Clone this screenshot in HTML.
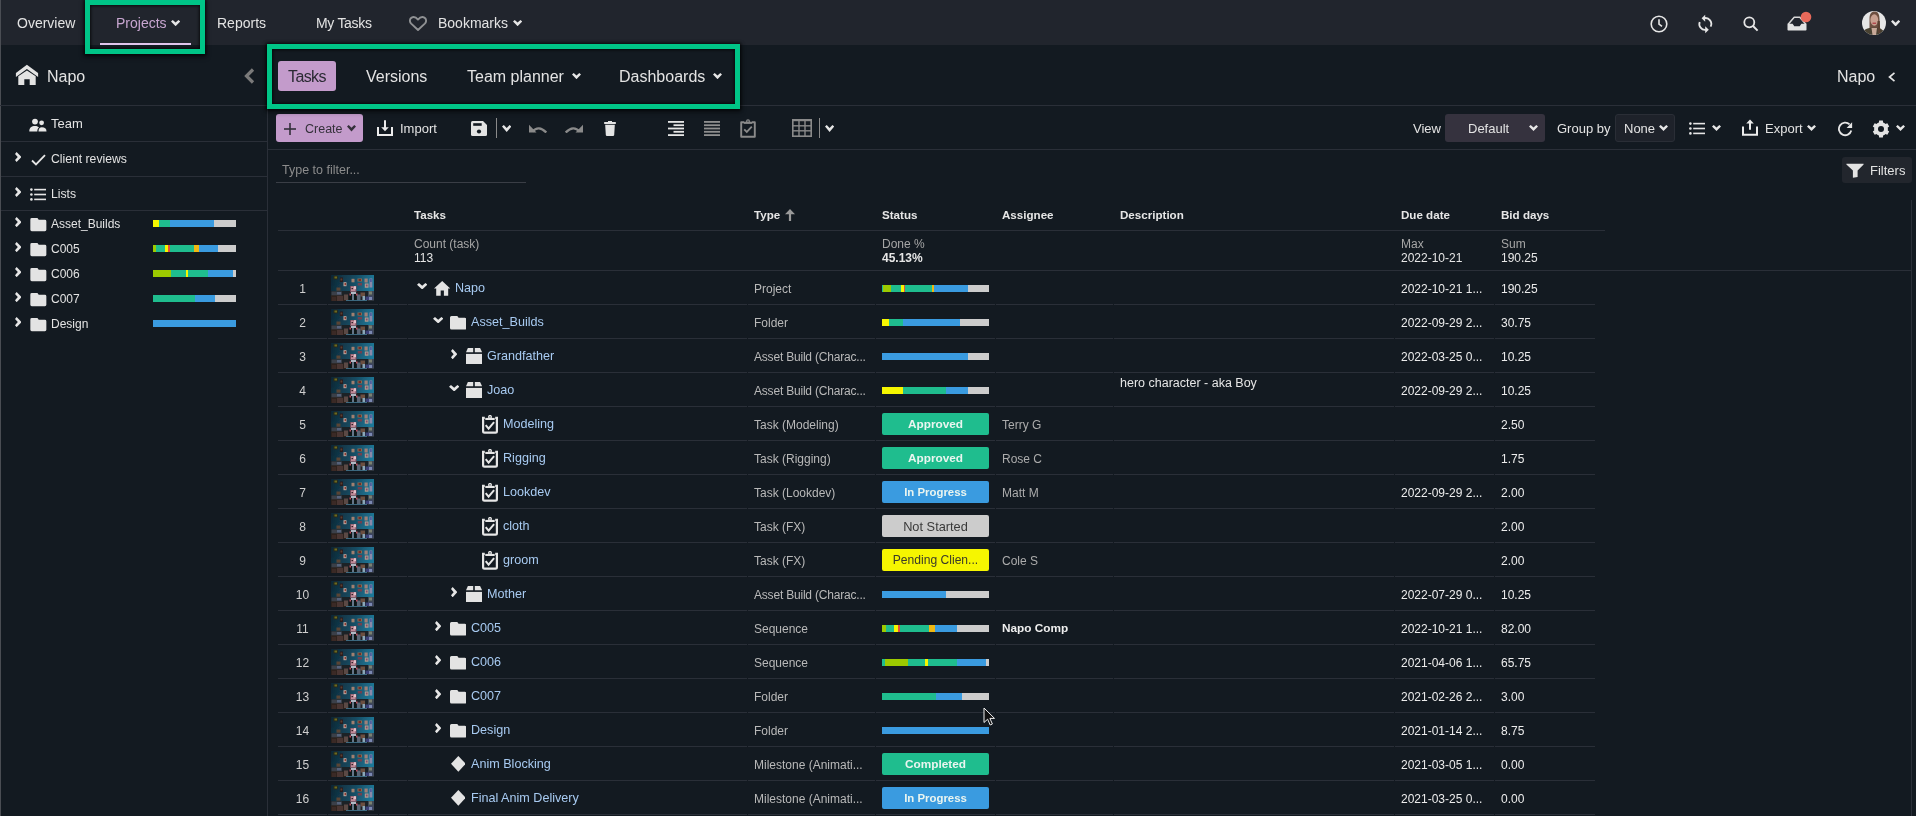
<!DOCTYPE html><html><head><meta charset="utf-8"><style>
html,body{margin:0;padding:0;-webkit-font-smoothing:antialiased;width:1916px;height:816px;overflow:hidden;background:#131a21;font-family:"Liberation Sans", sans-serif;}
.t{position:absolute;white-space:nowrap;line-height:1;}
.r{position:absolute;display:block;}
#root{position:absolute;left:0;top:0;width:1916px;height:816px;overflow:hidden;will-change:transform;background:#131a21;}
</style></head><body><div id="root">
<div class="r" style="left:0px;top:0px;width:1916px;height:45px;background:#21252d;"></div>
<div class="r" style="left:0px;top:0px;width:1px;height:816px;background:#4a4d53;"></div>
<div class="t" style="left:17px;top:16.10px;font-size:14px;color:#e3e3e3;font-weight:400;">Overview</div>
<div class="t" style="left:116px;top:16.10px;font-size:14px;color:#c8a6d0;font-weight:400;">Projects</div>
<svg class="r" style="left:171px;top:20px;" width="9.2" height="6.2" viewBox="0 0 9.2 6.2"><polygon points="0,1.49 1.75,0 4.60,2.60 7.45,0 9.2,1.49 4.60,6.2" fill="#e6e6e6"/></svg>
<div class="r" style="left:100px;top:43px;width:91px;height:2px;background:#e0c4ec;"></div>
<div class="t" style="left:217px;top:16.10px;font-size:14px;color:#e3e3e3;font-weight:400;">Reports</div>
<div class="t" style="left:316px;top:16.10px;font-size:14px;color:#e3e3e3;font-weight:400;letter-spacing:-0.3px">My Tasks</div>
<svg class="r" style="left:409px;top:16px;" width="18" height="15" viewBox="0 0 18 15"><path d="M9 14 L2.2 7.6 C0.3 5.7 0.6 2.7 2.6 1.6 C4.6 0.5 7 1.2 9 3.6 C11 1.2 13.4 0.5 15.4 1.6 C17.4 2.7 17.7 5.7 15.8 7.6 Z" fill="none" stroke="#909294" stroke-width="1.9" stroke-linejoin="round"/></svg>
<div class="t" style="left:438px;top:16.10px;font-size:14px;color:#e3e3e3;font-weight:400;">Bookmarks</div>
<svg class="r" style="left:513px;top:20px;" width="9.2" height="6.2" viewBox="0 0 9.2 6.2"><polygon points="0,1.49 1.75,0 4.60,2.60 7.45,0 9.2,1.49 4.60,6.2" fill="#e6e6e6"/></svg>
<svg class="r" style="left:1650px;top:15px;" width="18" height="18" viewBox="0 0 18 18"><circle cx="9" cy="9" r="7.8" fill="none" stroke="#e6e6e6" stroke-width="1.6"/><polyline points="9,4.2 9,9.2 12,11.4" fill="none" stroke="#e6e6e6" stroke-width="1.6"/></svg>
<svg class="r" style="left:1697px;top:14px;" width="16" height="20" viewBox="0 0 16 20"><path d="M7.2 4.2 A5.8 5.8 0 0 1 13.6 12.6" fill="none" stroke="#e6e6e6" stroke-width="1.8"/><polygon points="4.6,4.2 8.2,0.7 8.2,7.7" fill="#e6e6e6"/><path d="M2.7 8 A5.8 5.8 0 0 0 8.9 15.8" fill="none" stroke="#e6e6e6" stroke-width="1.8"/><polygon points="11.8,15.8 8.2,12.3 8.2,19.3" fill="#e6e6e6"/></svg>
<svg class="r" style="left:1743px;top:16px;" width="16" height="16" viewBox="0 0 16 16"><circle cx="6.3" cy="6.3" r="5" fill="none" stroke="#e6e6e6" stroke-width="1.8"/><line x1="10" y1="10" x2="14.6" y2="14.6" stroke="#e6e6e6" stroke-width="2"/></svg>
<svg class="r" style="left:1787px;top:16px;" width="20" height="15" viewBox="0 0 20 15"><path d="M1.2 8.2 L7.2 1.2 L12.8 1.2 L18.8 8.2" fill="none" stroke="#d8d8d8" stroke-width="1.5" stroke-linejoin="round"/><path d="M0.5 7.8 L5.6 7.8 L7.3 10.3 L12.7 10.3 L14.4 7.8 L19.5 7.8 L19.5 13.7 Q19.5 14.5 18.7 14.5 L1.3 14.5 Q0.5 14.5 0.5 13.7 Z" fill="#e3e3e3"/></svg>
<svg class="r" style="left:1800px;top:11px;" width="12" height="12" viewBox="0 0 12 12"><circle cx="6" cy="6" r="5.3" fill="#e8695a"/></svg>
<svg class="r" style="left:1862px;top:11px" width="24" height="24" viewBox="0 0 24 24"><defs><clipPath id="av"><circle cx="12" cy="12" r="12"/></clipPath><filter id="avb"><feGaussianBlur stdDeviation="0.4"/></filter></defs><g clip-path="url(#av)"><rect width="24" height="24" fill="#e6e6e6"/><g filter="url(#avb)"><path d="M7.5 24 L7.5 8 C7.5 2.5 9.5 0.5 12.5 0.5 C16 0.5 17.5 3 17.5 8 L18 22 L16 24 Z" fill="#6e5040"/><ellipse cx="12.3" cy="9" rx="3.9" ry="5.8" fill="#c9a090"/><rect x="10.5" y="11.6" width="3.6" height="1.3" fill="#b04048"/><path d="M0 24 L2 19.5 C4 17.5 7 17 9 16.8 L15.5 16.8 C17.5 17 19.5 18 21 19.5 L24 24 Z" fill="#4a4232"/><path d="M9.5 17 L15 17 L14 24 L10.5 24 Z" fill="#c8a898"/><path d="M15.5 10 L17.8 10 L18.2 22 L15.8 22 Z" fill="#5a4030"/></g></g></svg>
<svg class="r" style="left:1891px;top:19.5px;" width="9.2" height="6.5" viewBox="0 0 9.2 6.5"><polygon points="0,1.49 1.75,0 4.60,2.73 7.45,0 9.2,1.49 4.60,6.5" fill="#e6e6e6"/></svg>
<div class="r" style="left:267px;top:45px;width:1px;height:771px;background:#2a2f38;"></div>
<div class="r" style="left:0px;top:105px;width:1916px;height:1px;background:#2a2f38;"></div>
<svg class="r" style="left:15px;top:64px;" width="24" height="22" viewBox="0 0 24 22"><path d="M11.9 0.8 L23.1 9 L23.1 12.9 L11.9 5.1 L0.9 12.9 L0.9 9 Z" fill="#e3e3e3"/><path d="M3.3 12.3 L11.9 6.6 L20.7 12.3 L20.7 21 L14.7 21 L14.7 15.3 L9.3 15.3 L9.3 21 L3.3 21 Z" fill="#e3e3e3"/></svg>
<div class="t" style="left:47px;top:69.40px;font-size:16px;color:#e3e3e3;font-weight:400;">Napo</div>
<svg class="r" style="left:244px;top:68px;" width="11" height="16" viewBox="0 0 11 16"><polyline points="9,1.5 2.5,8 9,14.5" fill="none" stroke="#7a7a7a" stroke-width="3.2"/></svg>
<div class="r" style="left:1px;top:141px;width:266px;height:1px;background:#2a2f38;"></div>
<div class="r" style="left:1px;top:176px;width:266px;height:1px;background:#2a2f38;"></div>
<div class="r" style="left:1px;top:210px;width:266px;height:1px;background:#2a2f38;"></div>
<svg class="r" style="left:29px;top:118px;" width="18" height="14" viewBox="0 0 18 14"><circle cx="6" cy="3.6" r="2.9" fill="#e6e6e6"/><circle cx="12.6" cy="4.8" r="2.4" fill="#e6e6e6"/><path d="M0.3 13.5 C0.3 9.5 2.5 8 6 8 C8 8 9.3 8.6 10 9.6 C8.8 10.4 8.3 11.8 8.3 13.5 Z" fill="#e6e6e6"/><path d="M9.5 13.5 C9.5 10.7 10.8 9.3 12.8 9.3 C15.8 9.3 17.5 10.7 17.5 13.5 Z" fill="#e6e6e6"/></svg>
<div class="t" style="left:51px;top:116.95px;font-size:13px;color:#e3e3e3;font-weight:400;">Team</div>
<svg class="r" style="left:14.7px;top:152px;" width="6.5" height="10" viewBox="0 0 6.5 10"><polygon points="1.61,0 0,1.90 2.73,5.00 0,8.10 1.61,10 6.5,5.00" fill="#e6e6e6"/></svg>
<svg class="r" style="left:31px;top:154px;" width="15" height="12" viewBox="0 0 15 12"><polyline points="1,6.5 5,10.5 14,1.2" fill="none" stroke="#e6e6e6" stroke-width="1.8"/></svg>
<div class="t" style="left:51px;top:153.23px;font-size:12.2px;color:#e3e3e3;font-weight:400;">Client reviews</div>
<svg class="r" style="left:14.7px;top:187px;" width="6.5" height="10" viewBox="0 0 6.5 10"><polygon points="1.61,0 0,1.90 2.73,5.00 0,8.10 1.61,10 6.5,5.00" fill="#e6e6e6"/></svg>
<svg class="r" style="left:30px;top:188px;" width="16" height="13" viewBox="0 0 16 13"><circle cx="1.4" cy="1.6" r="1.3" fill="#e6e6e6"/><circle cx="1.4" cy="6.5" r="1.3" fill="#e6e6e6"/><circle cx="1.4" cy="11.4" r="1.3" fill="#e6e6e6"/><rect x="4.2" y="0.8" width="11.8" height="1.6" fill="#e6e6e6"/><rect x="4.2" y="5.7" width="11.8" height="1.6" fill="#e6e6e6"/><rect x="4.2" y="10.6" width="11.8" height="1.6" fill="#e6e6e6"/></svg>
<div class="t" style="left:51px;top:188.23px;font-size:12.2px;color:#e3e3e3;font-weight:400;">Lists</div>
<svg class="r" style="left:14.7px;top:216.8px;" width="6.7" height="10.2" viewBox="0 0 6.7 10.2"><polygon points="1.65,0 0,1.94 2.81,5.10 0,8.26 1.65,10.2 6.7,5.10" fill="#e6e6e6"/></svg>
<svg class="r" style="left:29.7px;top:218.0px;overflow:visible" width="16.7" height="13.2" viewBox="0 0 16.4 13.5"><path d="M0 1.5 Q0 0 1.5 0 L7.3 0 L8.6 1.8 L14.9 1.8 Q16.4 1.8 16.4 3.3 L16.4 12 Q16.4 13.5 14.9 13.5 L1.5 13.5 Q0 13.5 0 12 Z" fill="#e3e3e3"/></svg>
<div class="t" style="left:51px;top:218.10px;font-size:12px;color:#e3e3e3;font-weight:400;">Asset_Builds</div>
<svg class="r" style="left:153px;top:220px;shape-rendering:crispEdges" width="83" height="7" viewBox="0 0 83 7"><rect x="0.00" y="0" width="6.00" height="7" fill="#f6f600"/><rect x="6.00" y="0" width="10.80" height="7" fill="#1fbd8e"/><rect x="16.80" y="0" width="44.20" height="7" fill="#3a9be0"/><rect x="61.00" y="0" width="22.00" height="7" fill="#cccccc"/></svg>
<svg class="r" style="left:14.7px;top:241.8px;" width="6.7" height="10.2" viewBox="0 0 6.7 10.2"><polygon points="1.65,0 0,1.94 2.81,5.10 0,8.26 1.65,10.2 6.7,5.10" fill="#e6e6e6"/></svg>
<svg class="r" style="left:29.7px;top:243.0px;overflow:visible" width="16.7" height="13.2" viewBox="0 0 16.4 13.5"><path d="M0 1.5 Q0 0 1.5 0 L7.3 0 L8.6 1.8 L14.9 1.8 Q16.4 1.8 16.4 3.3 L16.4 12 Q16.4 13.5 14.9 13.5 L1.5 13.5 Q0 13.5 0 12 Z" fill="#e3e3e3"/></svg>
<div class="t" style="left:51px;top:243.10px;font-size:12px;color:#e3e3e3;font-weight:400;">C005</div>
<svg class="r" style="left:153px;top:245px;shape-rendering:crispEdges" width="83" height="7" viewBox="0 0 83 7"><rect x="0.00" y="0" width="3.00" height="7" fill="#9dca00"/><rect x="3.00" y="0" width="8.80" height="7" fill="#1fbd8e"/><rect x="11.80" y="0" width="3.20" height="7" fill="#f6f600"/><rect x="15.00" y="0" width="1.80" height="7" fill="#e2503f"/><rect x="16.80" y="0" width="24.20" height="7" fill="#1fbd8e"/><rect x="41.00" y="0" width="5.00" height="7" fill="#f0b812"/><rect x="46.00" y="0" width="18.80" height="7" fill="#3a9be0"/><rect x="64.80" y="0" width="18.20" height="7" fill="#cccccc"/></svg>
<svg class="r" style="left:14.7px;top:266.8px;" width="6.7" height="10.2" viewBox="0 0 6.7 10.2"><polygon points="1.65,0 0,1.94 2.81,5.10 0,8.26 1.65,10.2 6.7,5.10" fill="#e6e6e6"/></svg>
<svg class="r" style="left:29.7px;top:268.0px;overflow:visible" width="16.7" height="13.2" viewBox="0 0 16.4 13.5"><path d="M0 1.5 Q0 0 1.5 0 L7.3 0 L8.6 1.8 L14.9 1.8 Q16.4 1.8 16.4 3.3 L16.4 12 Q16.4 13.5 14.9 13.5 L1.5 13.5 Q0 13.5 0 12 Z" fill="#e3e3e3"/></svg>
<div class="t" style="left:51px;top:268.10px;font-size:12px;color:#e3e3e3;font-weight:400;">C006</div>
<svg class="r" style="left:153px;top:270px;shape-rendering:crispEdges" width="83" height="7" viewBox="0 0 83 7"><rect x="0.00" y="0" width="18.00" height="7" fill="#9dca00"/><rect x="18.00" y="0" width="14.90" height="7" fill="#1fbd8e"/><rect x="32.90" y="0" width="2.40" height="7" fill="#f6f600"/><rect x="35.30" y="0" width="19.60" height="7" fill="#1fbd8e"/><rect x="54.90" y="0" width="25.10" height="7" fill="#3a9be0"/><rect x="80.00" y="0" width="3.00" height="7" fill="#cccccc"/></svg>
<svg class="r" style="left:14.7px;top:291.8px;" width="6.7" height="10.2" viewBox="0 0 6.7 10.2"><polygon points="1.65,0 0,1.94 2.81,5.10 0,8.26 1.65,10.2 6.7,5.10" fill="#e6e6e6"/></svg>
<svg class="r" style="left:29.7px;top:293.0px;overflow:visible" width="16.7" height="13.2" viewBox="0 0 16.4 13.5"><path d="M0 1.5 Q0 0 1.5 0 L7.3 0 L8.6 1.8 L14.9 1.8 Q16.4 1.8 16.4 3.3 L16.4 12 Q16.4 13.5 14.9 13.5 L1.5 13.5 Q0 13.5 0 12 Z" fill="#e3e3e3"/></svg>
<div class="t" style="left:51px;top:293.10px;font-size:12px;color:#e3e3e3;font-weight:400;">C007</div>
<svg class="r" style="left:153px;top:295px;shape-rendering:crispEdges" width="83" height="7" viewBox="0 0 83 7"><rect x="0.00" y="0" width="42.10" height="7" fill="#1fbd8e"/><rect x="42.10" y="0" width="19.90" height="7" fill="#3a9be0"/><rect x="62.00" y="0" width="21.00" height="7" fill="#cccccc"/></svg>
<svg class="r" style="left:14.7px;top:316.8px;" width="6.7" height="10.2" viewBox="0 0 6.7 10.2"><polygon points="1.65,0 0,1.94 2.81,5.10 0,8.26 1.65,10.2 6.7,5.10" fill="#e6e6e6"/></svg>
<svg class="r" style="left:29.7px;top:318.0px;overflow:visible" width="16.7" height="13.2" viewBox="0 0 16.4 13.5"><path d="M0 1.5 Q0 0 1.5 0 L7.3 0 L8.6 1.8 L14.9 1.8 Q16.4 1.8 16.4 3.3 L16.4 12 Q16.4 13.5 14.9 13.5 L1.5 13.5 Q0 13.5 0 12 Z" fill="#e3e3e3"/></svg>
<div class="t" style="left:51px;top:318.10px;font-size:12px;color:#e3e3e3;font-weight:400;">Design</div>
<svg class="r" style="left:153px;top:320px;shape-rendering:crispEdges" width="83" height="7" viewBox="0 0 83 7"><rect x="0.00" y="0" width="83.00" height="7" fill="#3a9be0"/></svg>
<div class="r" style="left:278px;top:61px;width:58px;height:30px;background:#c39bcb;border-radius:3px"></div>
<div class="t" style="left:288px;top:68.80px;font-size:16px;color:#2a2a33;font-weight:400;letter-spacing:-0.6px">Tasks</div>
<div class="t" style="left:366px;top:69.00px;font-size:16px;color:#e3e3e3;font-weight:400;">Versions</div>
<div class="t" style="left:467px;top:69.00px;font-size:16px;color:#e3e3e3;font-weight:400;">Team planner</div>
<svg class="r" style="left:572px;top:73.3px;" width="9" height="6.2" viewBox="0 0 9 6.2"><polygon points="0,1.45 1.71,0 4.50,2.60 7.29,0 9,1.45 4.50,6.2" fill="#e6e6e6"/></svg>
<div class="t" style="left:619px;top:69.00px;font-size:16px;color:#e3e3e3;font-weight:400;">Dashboards</div>
<svg class="r" style="left:713px;top:73.3px;" width="9" height="6.2" viewBox="0 0 9 6.2"><polygon points="0,1.45 1.71,0 4.50,2.60 7.29,0 9,1.45 4.50,6.2" fill="#e6e6e6"/></svg>
<div class="t" style="left:1837px;top:69.00px;font-size:16px;color:#e3e3e3;font-weight:400;">Napo</div>
<svg class="r" style="left:1887.5px;top:72px;" width="7.5" height="10" viewBox="0 0 7.5 10"><polyline points="6.5,0.8 1.5,5 6.5,9.2" fill="none" stroke="#e6e6e6" stroke-width="1.7"/></svg>
<div class="r" style="left:268px;top:149px;width:1648px;height:1px;background:#2a2f38;"></div>
<div class="r" style="left:276px;top:114px;width:87px;height:28px;background:#c39bcb;border-radius:3px"></div>
<svg class="r" style="left:284px;top:123px;" width="12" height="12" viewBox="0 0 12 12"><rect x="5.2" y="0" width="1.6" height="12" fill="#34303a"/><rect x="0" y="5.2" width="12" height="1.6" fill="#34303a"/></svg>
<div class="t" style="left:305px;top:122.97px;font-size:12.5px;color:#34303a;font-weight:400;">Create</div>
<svg class="r" style="left:347px;top:125px;" width="9" height="6.5" viewBox="0 0 9 6.5"><polygon points="0,1.45 1.71,0 4.50,2.73 7.29,0 9,1.45 4.50,6.5" fill="#34303a"/></svg>
<svg class="r" style="left:377px;top:120px;" width="16" height="16" viewBox="0 0 16 16"><path d="M1 7 L1 15 L15 15 L15 7" fill="none" stroke="#ececec" stroke-width="2"/><line x1="8" y1="0.3" x2="8" y2="8" stroke="#ececec" stroke-width="2"/><polygon points="4.2,7.2 11.8,7.2 8,11.3" fill="#ececec"/></svg>
<div class="t" style="left:400px;top:121.95px;font-size:13px;color:#e3e3e3;font-weight:400;">Import</div>
<svg class="r" style="left:471px;top:121px;" width="16" height="15" viewBox="0 0 16 15"><path d="M0 1.5 Q0 0 1.5 0 L12 0 L16 4 L16 13.5 Q16 15 14.5 15 L1.5 15 Q0 15 0 13.5 Z" fill="#e3e3e3"/><rect x="2.2" y="2.2" width="8.5" height="2.6" fill="#131a21"/><circle cx="8" cy="10.5" r="2.1" fill="#131a21"/></svg>
<div class="r" style="left:496px;top:118px;width:1px;height:20px;background:#8a8a8a;"></div>
<svg class="r" style="left:502px;top:125px;" width="9.4" height="7" viewBox="0 0 9.4 7"><polygon points="0,1.52 1.79,0 4.70,2.94 7.61,0 9.4,1.52 4.70,7" fill="#e6e6e6"/></svg>
<svg class="r" style="left:529px;top:124px;" width="18" height="9" viewBox="0 0 18 9"><path d="M3.5 7.5 Q9.5 0.8 17.3 8.5" fill="none" stroke="#8a8a8a" stroke-width="2.4"/><polygon points="0,0.8 0,8.5 7.5,8.5" fill="#8a8a8a"/></svg>
<svg class="r" style="left:565px;top:124px;" width="18" height="9" viewBox="0 0 18 9"><path d="M14.5 7.5 Q8.5 0.8 0.7 8.5" fill="none" stroke="#8a8a8a" stroke-width="2.4"/><polygon points="18,0.8 18,8.5 10.5,8.5" fill="#8a8a8a"/></svg>
<svg class="r" style="left:604px;top:121px;" width="12" height="15" viewBox="0 0 12 15"><rect x="0" y="1" width="12" height="2" rx="0.8" fill="#e3e3e3"/><rect x="4" y="0" width="4" height="1.5" fill="#e3e3e3"/><path d="M1.2 3.8 L10.8 3.8 L10.2 14 Q10.1 15 9 15 L3 15 Q1.9 15 1.8 14 Z" fill="#e3e3e3"/></svg>
<svg class="r" style="left:668px;top:121px;" width="16" height="15" viewBox="0 0 16 15"><rect x="0" y="0" width="16" height="1.8" fill="#e6e6e6"/><rect x="5.5" y="3.3" width="10.5" height="1.8" fill="#e6e6e6"/><rect x="0" y="6.6" width="16" height="1.8" fill="#e6e6e6"/><rect x="5.5" y="9.9" width="10.5" height="1.8" fill="#e6e6e6"/><rect x="0" y="13.2" width="16" height="1.8" fill="#e6e6e6"/></svg>
<svg class="r" style="left:704px;top:121px;" width="16" height="15" viewBox="0 0 16 15"><rect x="0" y="0" width="16" height="1.8" fill="#8f8f8f"/><rect x="0" y="3.3" width="16" height="1.8" fill="#8f8f8f"/><rect x="0" y="6.6" width="16" height="1.8" fill="#8f8f8f"/><rect x="0" y="9.9" width="16" height="1.8" fill="#8f8f8f"/><rect x="0" y="13.2" width="16" height="1.8" fill="#8f8f8f"/></svg>
<svg class="r" style="left:740px;top:119px;" width="16" height="19" viewBox="0 0 16 18"><path d="M4 2.8 L1.2 2.8 L1.2 17.2 L14.8 17.2 L14.8 2.8 L12 2.8" fill="none" stroke="#8a8a8a" stroke-width="1.9" stroke-linejoin="round"/><rect x="3.8" y="2.2" width="8.4" height="2.2" fill="#8a8a8a"/><circle cx="8" cy="1.8" r="1.4" fill="none" stroke="#8a8a8a" stroke-width="1.2"/><polyline points="4.2,9.8 6.8,12.4 11.8,7.2" fill="none" stroke="#8a8a8a" stroke-width="1.8"/></svg>
<svg class="r" style="left:792px;top:119px;" width="20" height="18" viewBox="0 0 20 18"><rect x="0.8" y="0.8" width="18.4" height="16.4" fill="none" stroke="#8a8a8a" stroke-width="1.6"/><rect x="0" y="0" width="20" height="2.2" fill="#8a8a8a"/><line x1="7" y1="1" x2="7" y2="17" stroke="#8a8a8a" stroke-width="1.4"/><line x1="13" y1="1" x2="13" y2="17" stroke="#8a8a8a" stroke-width="1.4"/><line x1="1" y1="6.8" x2="19" y2="6.8" stroke="#8a8a8a" stroke-width="1.4"/><line x1="1" y1="11.8" x2="19" y2="11.8" stroke="#8a8a8a" stroke-width="1.4"/></svg>
<div class="r" style="left:819px;top:118px;width:1px;height:20px;background:#8a8a8a;"></div>
<svg class="r" style="left:825px;top:125px;" width="9.2" height="7" viewBox="0 0 9.2 7"><polygon points="0,1.49 1.75,0 4.60,2.94 7.45,0 9.2,1.49 4.60,7" fill="#e6e6e6"/></svg>
<div class="t" style="left:1413px;top:121.95px;font-size:13px;color:#e3e3e3;font-weight:400;">View</div>
<div class="r" style="left:1445px;top:114px;width:100px;height:28px;background:#35323e;border-radius:3px"></div>
<div class="t" style="left:1468px;top:121.95px;font-size:13px;color:#e3e3e3;font-weight:400;">Default</div>
<svg class="r" style="left:1529px;top:125px;" width="9" height="6" viewBox="0 0 9 6"><polygon points="0,1.45 1.71,0 4.50,2.52 7.29,0 9,1.45 4.50,6" fill="#e6e6e6"/></svg>
<div class="t" style="left:1557px;top:121.95px;font-size:13px;color:#e3e3e3;font-weight:400;">Group by</div>
<div class="r" style="left:1615px;top:114px;width:60px;height:28px;background:#1e222a;border-radius:3px;box-sizing:border-box;border:1px solid #2a2e36"></div>
<div class="t" style="left:1624px;top:121.95px;font-size:13px;color:#e3e3e3;font-weight:400;">None</div>
<svg class="r" style="left:1659px;top:125px;" width="9" height="6" viewBox="0 0 9 6"><polygon points="0,1.45 1.71,0 4.50,2.52 7.29,0 9,1.45 4.50,6" fill="#e6e6e6"/></svg>
<svg class="r" style="left:1689px;top:122px;" width="16" height="13" viewBox="0 0 16 13"><circle cx="1.4" cy="1.6" r="1.3" fill="#e6e6e6"/><circle cx="1.4" cy="6.5" r="1.3" fill="#e6e6e6"/><circle cx="1.4" cy="11.4" r="1.3" fill="#e6e6e6"/><rect x="4.2" y="0.8" width="11.8" height="1.6" fill="#e6e6e6"/><rect x="4.2" y="5.7" width="11.8" height="1.6" fill="#e6e6e6"/><rect x="4.2" y="10.6" width="11.8" height="1.6" fill="#e6e6e6"/></svg>
<svg class="r" style="left:1712px;top:125px;" width="9" height="6" viewBox="0 0 9 6"><polygon points="0,1.45 1.71,0 4.50,2.52 7.29,0 9,1.45 4.50,6" fill="#e6e6e6"/></svg>
<svg class="r" style="left:1742px;top:119.3px;" width="16" height="17" viewBox="0 0 16 17"><path d="M1 7.5 L1 15.7 L15 15.7 L15 7.5" fill="none" stroke="#ececec" stroke-width="2"/><line x1="8" y1="4" x2="8" y2="10.8" stroke="#ececec" stroke-width="2"/><polygon points="4.2,4.6 11.8,4.6 8,0.4" fill="#ececec"/></svg>
<div class="t" style="left:1765px;top:121.95px;font-size:13px;color:#e3e3e3;font-weight:400;">Export</div>
<svg class="r" style="left:1807px;top:125px;" width="9" height="6" viewBox="0 0 9 6"><polygon points="0,1.45 1.71,0 4.50,2.52 7.29,0 9,1.45 4.50,6" fill="#e6e6e6"/></svg>
<svg class="r" style="left:1838px;top:121px;" width="15" height="16" viewBox="0 0 15 16"><path d="M13.3 9.6 A6.3 6.3 0 1 1 11.6 3.4" fill="none" stroke="#e6e6e6" stroke-width="1.8"/><polygon points="14.1,1.2 14.1,7 8.6,7" fill="#e6e6e6"/></svg>
<svg class="r" style="left:1872px;top:119.5px;" width="18" height="18" viewBox="0 0 18 18"><path d="M6.85 2.76 L7.14 0.60 L10.86 0.60 L11.15 2.76 L13.33 4.02 L15.34 3.19 L17.20 6.41 L15.48 7.74 L15.48 10.26 L17.20 11.59 L15.34 14.81 L13.33 13.98 L11.15 15.24 L10.86 17.40 L7.14 17.40 L6.85 15.24 L4.67 13.98 L2.66 14.81 L0.80 11.59 L2.52 10.26 L2.52 7.74 L0.80 6.41 L2.66 3.19 L4.67 4.02 Z" fill="#e3e3e3"/><circle cx="9" cy="9" r="6.8" fill="#e3e3e3"/><circle cx="9" cy="9" r="3" fill="#131a21"/></svg>
<svg class="r" style="left:1896px;top:125px;" width="9" height="6" viewBox="0 0 9 6"><polygon points="0,1.45 1.71,0 4.50,2.52 7.29,0 9,1.45 4.50,6" fill="#e6e6e6"/></svg>
<div class="t" style="left:282px;top:164.38px;font-size:12.5px;color:#8c8c8c;font-weight:400;">Type to filter...</div>
<div class="r" style="left:276px;top:182px;width:250px;height:1px;background:#3a3e46;"></div>
<div class="r" style="left:1842px;top:157px;width:70px;height:26px;background:#22262d;border-radius:3px"></div>
<svg class="r" style="left:1846px;top:163px;" width="18" height="15" viewBox="0 0 18 15"><path d="M0.4 0.8 L17.6 0.8 L17.6 1.4 L11.6 7.6 L11.6 13.9 L6.9 14.8 L6.9 7.6 L0.4 1.4 Z" fill="#e3e3e3"/></svg>
<div class="t" style="left:1870px;top:163.95px;font-size:13px;color:#e3e3e3;font-weight:400;">Filters</div>
<div class="t" style="left:414px;top:209.14px;font-size:11.6px;color:#e6e6e6;font-weight:700;">Tasks</div>
<div class="t" style="left:754px;top:209.14px;font-size:11.6px;color:#e6e6e6;font-weight:700;">Type</div>
<div class="t" style="left:882px;top:209.14px;font-size:11.6px;color:#e6e6e6;font-weight:700;">Status</div>
<div class="t" style="left:1002px;top:209.14px;font-size:11.6px;color:#e6e6e6;font-weight:700;">Assignee</div>
<div class="t" style="left:1120px;top:209.14px;font-size:11.6px;color:#e6e6e6;font-weight:700;">Description</div>
<div class="t" style="left:1401px;top:209.14px;font-size:11.6px;color:#e6e6e6;font-weight:700;">Due date</div>
<div class="t" style="left:1501px;top:209.14px;font-size:11.6px;color:#e6e6e6;font-weight:700;">Bid days</div>
<svg class="r" style="left:785px;top:209px;" width="10" height="12" viewBox="0 0 10 12"><polygon points="5,0 10,5.2 6.1,5.2 6.1,12 3.9,12 3.9,5.2 0,5.2" fill="#9a9a9a"/></svg>
<div class="r" style="left:278px;top:230px;width:1327px;height:1px;background:#2a2f38;"></div>
<div class="t" style="left:414px;top:237.80px;font-size:12px;color:#a6a6a6;font-weight:400;">Count (task)</div>
<div class="t" style="left:414px;top:252.20px;font-size:12px;color:#e6e6e6;font-weight:400;">113</div>
<div class="t" style="left:882px;top:237.80px;font-size:12px;color:#a6a6a6;font-weight:400;">Done %</div>
<div class="t" style="left:882px;top:252.20px;font-size:12px;color:#e6e6e6;font-weight:700;">45.13%</div>
<div class="t" style="left:1401px;top:237.80px;font-size:12px;color:#a6a6a6;font-weight:400;">Max</div>
<div class="t" style="left:1401px;top:252.20px;font-size:12px;color:#e6e6e6;font-weight:400;">2022-10-21</div>
<div class="t" style="left:1501px;top:237.80px;font-size:12px;color:#a6a6a6;font-weight:400;">Sum</div>
<div class="t" style="left:1501px;top:252.20px;font-size:12px;color:#e6e6e6;font-weight:400;">190.25</div>
<div class="r" style="left:278px;top:270px;width:1633px;height:1px;background:#2a2f38;"></div>
<div class="r" style="left:1911px;top:200px;width:1px;height:616px;background:#2a2f38;"></div>
<svg width="0" height="0" style="position:absolute"><defs><linearGradient id="tg" x1="0" y1="0" x2="1" y2="0.2"><stop offset="0" stop-color="#0e2634"/><stop offset="0.55" stop-color="#164a60"/><stop offset="1" stop-color="#1f7898"/></linearGradient>
<filter id="tb" x="-5%" y="-5%" width="110%" height="110%"><feGaussianBlur stdDeviation="0.35"/></filter>
<symbol id="thumb" viewBox="0 0 43 26"><g filter="url(#tb)">
<rect width="43" height="26" fill="url(#tg)"/>
<rect x="2.5" y="0.8" width="4.2" height="3.5" fill="#2a2a14"/><rect x="3.5" y="1.5" width="2.5" height="2" fill="#6a6a20"/>
<rect x="8.8" y="2.5" width="3.2" height="4.5" fill="#2a1a1c"/><rect x="9.5" y="3.5" width="1.8" height="2" fill="#5a4030"/>
<rect x="12.5" y="7.2" width="3" height="4" fill="#c0a8a0"/><rect x="13.5" y="8" width="1.5" height="2.2" fill="#8a3a30"/>
<rect x="20.5" y="3.8" width="3" height="3.5" fill="#a08070"/>
<rect x="26.5" y="3.5" width="4.5" height="3" fill="#8a6a50"/><rect x="27.5" y="4.2" width="2.5" height="1.6" fill="#702020"/>
<rect x="26.8" y="8" width="4.2" height="2.5" fill="#704050"/>
<rect x="33.5" y="3.5" width="3.2" height="4" fill="#a08078"/>
<rect x="33.8" y="8.5" width="3.7" height="4.2" fill="#b8a090"/><rect x="34.8" y="9.5" width="1.8" height="2" fill="#805070"/>
<rect x="38.5" y="3.5" width="2.8" height="9" fill="#8a88a8"/><rect x="39" y="4" width="1.8" height="3" fill="#5060a0"/>
<rect x="0" y="16" width="43" height="10" fill="#1e2228"/>
<rect x="0.5" y="16.5" width="10.5" height="4" fill="#3a3f4a"/><rect x="6" y="17" width="4" height="2.5" fill="#55627a"/>
<rect x="5.5" y="12.5" width="4" height="3.2" fill="#5a4535"/>
<rect x="0" y="20.5" width="17" height="5.5" fill="#2e221e"/><rect x="6" y="21" width="6" height="5" fill="#4a3530"/><rect x="1" y="22" width="4" height="4" fill="#3a2a28"/>
<rect x="13" y="19.5" width="4" height="5.5" fill="#5a4a45"/>
<rect x="29.5" y="17.5" width="4.5" height="4" fill="#6a5040"/>
<rect x="37" y="16" width="6" height="9.5" fill="#404a55"/><rect x="38" y="16.5" width="3" height="3" fill="#7a8070"/>
<rect x="34.5" y="21.5" width="7" height="3.5" fill="#3a3f78"/><rect x="38" y="22" width="3" height="3" fill="#7a88b0"/>
<rect x="31.5" y="21" width="2.5" height="4" fill="#8aa8b8"/>
<rect x="26" y="19.5" width="3.5" height="5.5" fill="#5a6575"/>
<rect x="19" y="11" width="6.5" height="6.2" fill="#704a58"/><rect x="20" y="11.5" width="4.5" height="4.5" fill="#c08a98"/><rect x="23" y="11.2" width="2" height="3" fill="#e0c0c8"/><rect x="20.5" y="13" width="1.5" height="1.2" fill="#302028"/>
<rect x="20" y="16.8" width="5" height="2.5" fill="#b0b8c4"/>
<rect x="18" y="19" width="7.5" height="6.5" fill="#101218"/><rect x="21.3" y="19" width="1.4" height="6" fill="#8aa0b8"/>
<rect x="18.5" y="18.5" width="1.5" height="2" fill="#c05060"/><rect x="25" y="18.5" width="1.5" height="2" fill="#c05060"/>
<rect x="15" y="25.3" width="21" height="0.7" fill="#4a8aa8"/>
</g></symbol></defs></svg>
<div class="r" style="left:278px;top:304px;width:49px;height:1px;background:#2a2f38;"></div>
<div class="r" style="left:328px;top:304px;width:50px;height:1px;background:#2a2f38;"></div>
<div class="r" style="left:379px;top:304px;width:28px;height:1px;background:#2a2f38;"></div>
<div class="r" style="left:408px;top:304px;width:339px;height:1px;background:#2a2f38;"></div>
<div class="r" style="left:748px;top:304px;width:127px;height:1px;background:#2a2f38;"></div>
<div class="r" style="left:876px;top:304px;width:119px;height:1px;background:#2a2f38;"></div>
<div class="r" style="left:996px;top:304px;width:117px;height:1px;background:#2a2f38;"></div>
<div class="r" style="left:1114px;top:304px;width:280px;height:1px;background:#2a2f38;"></div>
<div class="r" style="left:1395px;top:304px;width:99px;height:1px;background:#2a2f38;"></div>
<div class="r" style="left:1495px;top:304px;width:100px;height:1px;background:#2a2f38;"></div>
<div class="t" style="left:282px;width:41px;text-align:center;top:282.80px;font-size:12px;color:#cfcfcf">1</div>
<div class="r" style="left:331px;top:275px;width:43px;height:26px"><svg width="43" height="26" viewBox="0 0 43 26"><use href="#thumb"/></svg></div>
<svg class="r" style="left:416.8px;top:282.6px;" width="10.4" height="6.5" viewBox="0 0 10.4 6.5"><polygon points="0,1.68 1.98,0 5.20,2.73 8.42,0 10.4,1.68 5.20,6.5" fill="#e6e6e6"/></svg>
<svg class="r" style="left:433.8px;top:281px;" width="16.4" height="14.7" viewBox="0 0 16.4 14.7"><path d="M8.2 0 L16.4 7.6 L14.2 7.6 L14.2 14.7 L9.9 14.7 L9.9 9.4 L6.7 9.4 L6.7 14.7 L2.2 14.7 L2.2 7.6 L0 7.6 Z" fill="#e3e3e3"/></svg>
<div class="t" style="left:455px;top:281.89px;font-size:12.6px;color:#a8cbf2;font-weight:400;">Napo</div>
<div class="t" style="left:754px;top:282.80px;font-size:12px;color:#b9b9b9;font-weight:400;">Project</div>
<svg class="r" style="left:882px;top:285px;shape-rendering:crispEdges" width="107" height="7" viewBox="0 0 107 7"><rect x="0.00" y="0" width="0.80" height="7" fill="#1fbd8e"/><rect x="0.80" y="0" width="8.20" height="7" fill="#9dca00"/><rect x="9.00" y="0" width="10.00" height="7" fill="#1fbd8e"/><rect x="19.00" y="0" width="2.70" height="7" fill="#f6f600"/><rect x="21.70" y="0" width="1.30" height="7" fill="#e2503f"/><rect x="23.00" y="0" width="27.00" height="7" fill="#1fbd8e"/><rect x="50.00" y="0" width="2.00" height="7" fill="#f0b812"/><rect x="52.00" y="0" width="34.00" height="7" fill="#3a9be0"/><rect x="86.00" y="0" width="21.00" height="7" fill="#cccccc"/></svg>
<div class="t" style="left:1401px;top:282.80px;font-size:12px;color:#ececec;font-weight:400;">2022-10-21 1...</div>
<div class="t" style="left:1501px;top:282.80px;font-size:12px;color:#ececec;font-weight:400;">190.25</div>
<div class="r" style="left:278px;top:338px;width:49px;height:1px;background:#2a2f38;"></div>
<div class="r" style="left:328px;top:338px;width:50px;height:1px;background:#2a2f38;"></div>
<div class="r" style="left:379px;top:338px;width:28px;height:1px;background:#2a2f38;"></div>
<div class="r" style="left:408px;top:338px;width:339px;height:1px;background:#2a2f38;"></div>
<div class="r" style="left:748px;top:338px;width:127px;height:1px;background:#2a2f38;"></div>
<div class="r" style="left:876px;top:338px;width:119px;height:1px;background:#2a2f38;"></div>
<div class="r" style="left:996px;top:338px;width:117px;height:1px;background:#2a2f38;"></div>
<div class="r" style="left:1114px;top:338px;width:280px;height:1px;background:#2a2f38;"></div>
<div class="r" style="left:1395px;top:338px;width:99px;height:1px;background:#2a2f38;"></div>
<div class="r" style="left:1495px;top:338px;width:100px;height:1px;background:#2a2f38;"></div>
<div class="t" style="left:282px;width:41px;text-align:center;top:316.80px;font-size:12px;color:#cfcfcf">2</div>
<div class="r" style="left:331px;top:309px;width:43px;height:26px"><svg width="43" height="26" viewBox="0 0 43 26"><use href="#thumb"/></svg></div>
<svg class="r" style="left:432.8px;top:316.6px;" width="10.4" height="6.5" viewBox="0 0 10.4 6.5"><polygon points="0,1.68 1.98,0 5.20,2.73 8.42,0 10.4,1.68 5.20,6.5" fill="#e6e6e6"/></svg>
<svg class="r" style="left:449.8px;top:316.1px;" width="16.4" height="13.5" viewBox="0 0 16.4 13.5"><path d="M0 1.5 Q0 0 1.5 0 L7.3 0 L8.6 1.8 L14.9 1.8 Q16.4 1.8 16.4 3.3 L16.4 12 Q16.4 13.5 14.9 13.5 L1.5 13.5 Q0 13.5 0 12 Z" fill="#e3e3e3"/></svg>
<div class="t" style="left:471px;top:315.89px;font-size:12.6px;color:#a8cbf2;font-weight:400;">Asset_Builds</div>
<div class="t" style="left:754px;top:316.80px;font-size:12px;color:#b9b9b9;font-weight:400;">Folder</div>
<svg class="r" style="left:882px;top:319px;shape-rendering:crispEdges" width="107" height="7" viewBox="0 0 107 7"><rect x="0.00" y="0" width="7.00" height="7" fill="#f6f600"/><rect x="7.00" y="0" width="14.00" height="7" fill="#1fbd8e"/><rect x="21.00" y="0" width="57.00" height="7" fill="#3a9be0"/><rect x="78.00" y="0" width="29.00" height="7" fill="#cccccc"/></svg>
<div class="t" style="left:1401px;top:316.80px;font-size:12px;color:#ececec;font-weight:400;">2022-09-29 2...</div>
<div class="t" style="left:1501px;top:316.80px;font-size:12px;color:#ececec;font-weight:400;">30.75</div>
<div class="r" style="left:278px;top:372px;width:49px;height:1px;background:#2a2f38;"></div>
<div class="r" style="left:328px;top:372px;width:50px;height:1px;background:#2a2f38;"></div>
<div class="r" style="left:379px;top:372px;width:28px;height:1px;background:#2a2f38;"></div>
<div class="r" style="left:408px;top:372px;width:339px;height:1px;background:#2a2f38;"></div>
<div class="r" style="left:748px;top:372px;width:127px;height:1px;background:#2a2f38;"></div>
<div class="r" style="left:876px;top:372px;width:119px;height:1px;background:#2a2f38;"></div>
<div class="r" style="left:996px;top:372px;width:117px;height:1px;background:#2a2f38;"></div>
<div class="r" style="left:1114px;top:372px;width:280px;height:1px;background:#2a2f38;"></div>
<div class="r" style="left:1395px;top:372px;width:99px;height:1px;background:#2a2f38;"></div>
<div class="r" style="left:1495px;top:372px;width:100px;height:1px;background:#2a2f38;"></div>
<div class="t" style="left:282px;width:41px;text-align:center;top:350.80px;font-size:12px;color:#cfcfcf">3</div>
<div class="r" style="left:331px;top:343px;width:43px;height:26px"><svg width="43" height="26" viewBox="0 0 43 26"><use href="#thumb"/></svg></div>
<svg class="r" style="left:450.8px;top:348.8px;" width="6.3" height="10.3" viewBox="0 0 6.3 10.3"><polygon points="1.66,0 0,1.96 2.65,5.15 0,8.34 1.66,10.3 6.3,5.15" fill="#e6e6e6"/></svg>
<svg class="r" style="left:465.9px;top:347.9px;" width="16.2" height="16" viewBox="0 0 16.2 16"><polygon points="1.9,0 7.2,0 7.2,4.3 0,4.3" fill="#e3e3e3"/><polygon points="8.8,0 14.1,0 16.2,4.3 8.8,4.3" fill="#e3e3e3"/><rect x="0" y="5.9" width="16.2" height="10.1" fill="#e3e3e3"/></svg>
<div class="t" style="left:487px;top:349.89px;font-size:12.6px;color:#a8cbf2;font-weight:400;">Grandfather</div>
<div class="t" style="left:754px;top:350.80px;font-size:12px;color:#b9b9b9;font-weight:400;letter-spacing:-0.2px">Asset Build (Charac...</div>
<svg class="r" style="left:882px;top:353px;shape-rendering:crispEdges" width="107" height="7" viewBox="0 0 107 7"><rect x="0.00" y="0" width="86.00" height="7" fill="#3a9be0"/><rect x="86.00" y="0" width="21.00" height="7" fill="#cccccc"/></svg>
<div class="t" style="left:1401px;top:350.80px;font-size:12px;color:#ececec;font-weight:400;">2022-03-25 0...</div>
<div class="t" style="left:1501px;top:350.80px;font-size:12px;color:#ececec;font-weight:400;">10.25</div>
<div class="r" style="left:278px;top:406px;width:49px;height:1px;background:#2a2f38;"></div>
<div class="r" style="left:328px;top:406px;width:50px;height:1px;background:#2a2f38;"></div>
<div class="r" style="left:379px;top:406px;width:28px;height:1px;background:#2a2f38;"></div>
<div class="r" style="left:408px;top:406px;width:339px;height:1px;background:#2a2f38;"></div>
<div class="r" style="left:748px;top:406px;width:127px;height:1px;background:#2a2f38;"></div>
<div class="r" style="left:876px;top:406px;width:119px;height:1px;background:#2a2f38;"></div>
<div class="r" style="left:996px;top:406px;width:117px;height:1px;background:#2a2f38;"></div>
<div class="r" style="left:1114px;top:406px;width:280px;height:1px;background:#2a2f38;"></div>
<div class="r" style="left:1395px;top:406px;width:99px;height:1px;background:#2a2f38;"></div>
<div class="r" style="left:1495px;top:406px;width:100px;height:1px;background:#2a2f38;"></div>
<div class="t" style="left:282px;width:41px;text-align:center;top:384.80px;font-size:12px;color:#cfcfcf">4</div>
<div class="r" style="left:331px;top:377px;width:43px;height:26px"><svg width="43" height="26" viewBox="0 0 43 26"><use href="#thumb"/></svg></div>
<svg class="r" style="left:448.8px;top:384.6px;" width="10.4" height="6.5" viewBox="0 0 10.4 6.5"><polygon points="0,1.68 1.98,0 5.20,2.73 8.42,0 10.4,1.68 5.20,6.5" fill="#e6e6e6"/></svg>
<svg class="r" style="left:465.9px;top:381.9px;" width="16.2" height="16" viewBox="0 0 16.2 16"><polygon points="1.9,0 7.2,0 7.2,4.3 0,4.3" fill="#e3e3e3"/><polygon points="8.8,0 14.1,0 16.2,4.3 8.8,4.3" fill="#e3e3e3"/><rect x="0" y="5.9" width="16.2" height="10.1" fill="#e3e3e3"/></svg>
<div class="t" style="left:487px;top:383.89px;font-size:12.6px;color:#a8cbf2;font-weight:400;">Joao</div>
<div class="t" style="left:754px;top:384.80px;font-size:12px;color:#b9b9b9;font-weight:400;letter-spacing:-0.2px">Asset Build (Charac...</div>
<svg class="r" style="left:882px;top:387px;shape-rendering:crispEdges" width="107" height="7" viewBox="0 0 107 7"><rect x="0.00" y="0" width="21.00" height="7" fill="#f6f600"/><rect x="21.00" y="0" width="43.00" height="7" fill="#1fbd8e"/><rect x="64.00" y="0" width="22.00" height="7" fill="#3a9be0"/><rect x="86.00" y="0" width="21.00" height="7" fill="#cccccc"/></svg>
<div class="t" style="left:1120px;top:377.38px;font-size:12.5px;color:#e6e6e6;font-weight:400;">hero character - aka Boy</div>
<div class="t" style="left:1401px;top:384.80px;font-size:12px;color:#ececec;font-weight:400;">2022-09-29 2...</div>
<div class="t" style="left:1501px;top:384.80px;font-size:12px;color:#ececec;font-weight:400;">10.25</div>
<div class="r" style="left:278px;top:440px;width:49px;height:1px;background:#2a2f38;"></div>
<div class="r" style="left:328px;top:440px;width:50px;height:1px;background:#2a2f38;"></div>
<div class="r" style="left:379px;top:440px;width:28px;height:1px;background:#2a2f38;"></div>
<div class="r" style="left:408px;top:440px;width:339px;height:1px;background:#2a2f38;"></div>
<div class="r" style="left:748px;top:440px;width:127px;height:1px;background:#2a2f38;"></div>
<div class="r" style="left:876px;top:440px;width:119px;height:1px;background:#2a2f38;"></div>
<div class="r" style="left:996px;top:440px;width:117px;height:1px;background:#2a2f38;"></div>
<div class="r" style="left:1114px;top:440px;width:280px;height:1px;background:#2a2f38;"></div>
<div class="r" style="left:1395px;top:440px;width:99px;height:1px;background:#2a2f38;"></div>
<div class="r" style="left:1495px;top:440px;width:100px;height:1px;background:#2a2f38;"></div>
<div class="t" style="left:282px;width:41px;text-align:center;top:418.80px;font-size:12px;color:#cfcfcf">5</div>
<div class="r" style="left:331px;top:411px;width:43px;height:26px"><svg width="43" height="26" viewBox="0 0 43 26"><use href="#thumb"/></svg></div>
<svg class="r" style="left:482px;top:415.1px;" width="16" height="18.8" viewBox="0 0 16 18.8"><path d="M2.8 2.9 L1.1 2.9 L1.1 16.3 Q1.1 17.7 2.5 17.7 L13.5 17.7 Q14.9 17.7 14.9 16.3 L14.9 2.9 L13.2 2.9" fill="none" stroke="#e6e6e6" stroke-width="2.2"/><rect x="3.3" y="2.9" width="9.4" height="2.1" fill="#e6e6e6"/><circle cx="8" cy="1.9" r="1.35" fill="none" stroke="#e6e6e6" stroke-width="1.3"/><polyline points="3.7,10.1 6.6,13.6 12.1,7.2" fill="none" stroke="#e6e6e6" stroke-width="2"/></svg>
<div class="t" style="left:503px;top:417.89px;font-size:12.6px;color:#a8cbf2;font-weight:400;">Modeling</div>
<div class="t" style="left:754px;top:418.80px;font-size:12px;color:#b9b9b9;font-weight:400;">Task (Modeling)</div>
<div class="r" style="left:882px;top:413px;width:107px;height:22px;background:#1fbd8e;border-radius:2px;color:#eaf5f0;font-size:11.8px;font-weight:700;line-height:23px;text-align:center;white-space:nowrap">Approved</div>
<div class="t" style="left:1002px;top:418.80px;font-size:12px;color:#acacac;font-weight:400;">Terry G</div>
<div class="t" style="left:1501px;top:418.80px;font-size:12px;color:#ececec;font-weight:400;">2.50</div>
<div class="r" style="left:278px;top:474px;width:49px;height:1px;background:#2a2f38;"></div>
<div class="r" style="left:328px;top:474px;width:50px;height:1px;background:#2a2f38;"></div>
<div class="r" style="left:379px;top:474px;width:28px;height:1px;background:#2a2f38;"></div>
<div class="r" style="left:408px;top:474px;width:339px;height:1px;background:#2a2f38;"></div>
<div class="r" style="left:748px;top:474px;width:127px;height:1px;background:#2a2f38;"></div>
<div class="r" style="left:876px;top:474px;width:119px;height:1px;background:#2a2f38;"></div>
<div class="r" style="left:996px;top:474px;width:117px;height:1px;background:#2a2f38;"></div>
<div class="r" style="left:1114px;top:474px;width:280px;height:1px;background:#2a2f38;"></div>
<div class="r" style="left:1395px;top:474px;width:99px;height:1px;background:#2a2f38;"></div>
<div class="r" style="left:1495px;top:474px;width:100px;height:1px;background:#2a2f38;"></div>
<div class="t" style="left:282px;width:41px;text-align:center;top:452.80px;font-size:12px;color:#cfcfcf">6</div>
<div class="r" style="left:331px;top:445px;width:43px;height:26px"><svg width="43" height="26" viewBox="0 0 43 26"><use href="#thumb"/></svg></div>
<svg class="r" style="left:482px;top:449.1px;" width="16" height="18.8" viewBox="0 0 16 18.8"><path d="M2.8 2.9 L1.1 2.9 L1.1 16.3 Q1.1 17.7 2.5 17.7 L13.5 17.7 Q14.9 17.7 14.9 16.3 L14.9 2.9 L13.2 2.9" fill="none" stroke="#e6e6e6" stroke-width="2.2"/><rect x="3.3" y="2.9" width="9.4" height="2.1" fill="#e6e6e6"/><circle cx="8" cy="1.9" r="1.35" fill="none" stroke="#e6e6e6" stroke-width="1.3"/><polyline points="3.7,10.1 6.6,13.6 12.1,7.2" fill="none" stroke="#e6e6e6" stroke-width="2"/></svg>
<div class="t" style="left:503px;top:451.89px;font-size:12.6px;color:#a8cbf2;font-weight:400;">Rigging</div>
<div class="t" style="left:754px;top:452.80px;font-size:12px;color:#b9b9b9;font-weight:400;">Task (Rigging)</div>
<div class="r" style="left:882px;top:447px;width:107px;height:22px;background:#1fbd8e;border-radius:2px;color:#eaf5f0;font-size:11.8px;font-weight:700;line-height:23px;text-align:center;white-space:nowrap">Approved</div>
<div class="t" style="left:1002px;top:452.80px;font-size:12px;color:#acacac;font-weight:400;">Rose C</div>
<div class="t" style="left:1501px;top:452.80px;font-size:12px;color:#ececec;font-weight:400;">1.75</div>
<div class="r" style="left:278px;top:508px;width:49px;height:1px;background:#2a2f38;"></div>
<div class="r" style="left:328px;top:508px;width:50px;height:1px;background:#2a2f38;"></div>
<div class="r" style="left:379px;top:508px;width:28px;height:1px;background:#2a2f38;"></div>
<div class="r" style="left:408px;top:508px;width:339px;height:1px;background:#2a2f38;"></div>
<div class="r" style="left:748px;top:508px;width:127px;height:1px;background:#2a2f38;"></div>
<div class="r" style="left:876px;top:508px;width:119px;height:1px;background:#2a2f38;"></div>
<div class="r" style="left:996px;top:508px;width:117px;height:1px;background:#2a2f38;"></div>
<div class="r" style="left:1114px;top:508px;width:280px;height:1px;background:#2a2f38;"></div>
<div class="r" style="left:1395px;top:508px;width:99px;height:1px;background:#2a2f38;"></div>
<div class="r" style="left:1495px;top:508px;width:100px;height:1px;background:#2a2f38;"></div>
<div class="t" style="left:282px;width:41px;text-align:center;top:486.80px;font-size:12px;color:#cfcfcf">7</div>
<div class="r" style="left:331px;top:479px;width:43px;height:26px"><svg width="43" height="26" viewBox="0 0 43 26"><use href="#thumb"/></svg></div>
<svg class="r" style="left:482px;top:483.1px;" width="16" height="18.8" viewBox="0 0 16 18.8"><path d="M2.8 2.9 L1.1 2.9 L1.1 16.3 Q1.1 17.7 2.5 17.7 L13.5 17.7 Q14.9 17.7 14.9 16.3 L14.9 2.9 L13.2 2.9" fill="none" stroke="#e6e6e6" stroke-width="2.2"/><rect x="3.3" y="2.9" width="9.4" height="2.1" fill="#e6e6e6"/><circle cx="8" cy="1.9" r="1.35" fill="none" stroke="#e6e6e6" stroke-width="1.3"/><polyline points="3.7,10.1 6.6,13.6 12.1,7.2" fill="none" stroke="#e6e6e6" stroke-width="2"/></svg>
<div class="t" style="left:503px;top:485.89px;font-size:12.6px;color:#a8cbf2;font-weight:400;">Lookdev</div>
<div class="t" style="left:754px;top:486.80px;font-size:12px;color:#b9b9b9;font-weight:400;">Task (Lookdev)</div>
<div class="r" style="left:882px;top:481px;width:107px;height:22px;background:#3a9be0;border-radius:2px;color:#eaf5f0;font-size:11.4px;font-weight:700;line-height:23px;text-align:center;white-space:nowrap">In Progress</div>
<div class="t" style="left:1002px;top:486.80px;font-size:12px;color:#acacac;font-weight:400;">Matt M</div>
<div class="t" style="left:1401px;top:486.80px;font-size:12px;color:#ececec;font-weight:400;">2022-09-29 2...</div>
<div class="t" style="left:1501px;top:486.80px;font-size:12px;color:#ececec;font-weight:400;">2.00</div>
<div class="r" style="left:278px;top:542px;width:49px;height:1px;background:#2a2f38;"></div>
<div class="r" style="left:328px;top:542px;width:50px;height:1px;background:#2a2f38;"></div>
<div class="r" style="left:379px;top:542px;width:28px;height:1px;background:#2a2f38;"></div>
<div class="r" style="left:408px;top:542px;width:339px;height:1px;background:#2a2f38;"></div>
<div class="r" style="left:748px;top:542px;width:127px;height:1px;background:#2a2f38;"></div>
<div class="r" style="left:876px;top:542px;width:119px;height:1px;background:#2a2f38;"></div>
<div class="r" style="left:996px;top:542px;width:117px;height:1px;background:#2a2f38;"></div>
<div class="r" style="left:1114px;top:542px;width:280px;height:1px;background:#2a2f38;"></div>
<div class="r" style="left:1395px;top:542px;width:99px;height:1px;background:#2a2f38;"></div>
<div class="r" style="left:1495px;top:542px;width:100px;height:1px;background:#2a2f38;"></div>
<div class="t" style="left:282px;width:41px;text-align:center;top:520.80px;font-size:12px;color:#cfcfcf">8</div>
<div class="r" style="left:331px;top:513px;width:43px;height:26px"><svg width="43" height="26" viewBox="0 0 43 26"><use href="#thumb"/></svg></div>
<svg class="r" style="left:482px;top:517.1px;" width="16" height="18.8" viewBox="0 0 16 18.8"><path d="M2.8 2.9 L1.1 2.9 L1.1 16.3 Q1.1 17.7 2.5 17.7 L13.5 17.7 Q14.9 17.7 14.9 16.3 L14.9 2.9 L13.2 2.9" fill="none" stroke="#e6e6e6" stroke-width="2.2"/><rect x="3.3" y="2.9" width="9.4" height="2.1" fill="#e6e6e6"/><circle cx="8" cy="1.9" r="1.35" fill="none" stroke="#e6e6e6" stroke-width="1.3"/><polyline points="3.7,10.1 6.6,13.6 12.1,7.2" fill="none" stroke="#e6e6e6" stroke-width="2"/></svg>
<div class="t" style="left:503px;top:519.89px;font-size:12.6px;color:#a8cbf2;font-weight:400;">cloth</div>
<div class="t" style="left:754px;top:520.80px;font-size:12px;color:#b9b9b9;font-weight:400;">Task (FX)</div>
<div class="r" style="left:882px;top:515px;width:107px;height:22px;background:#cccccc;border-radius:2px;color:#3a3a3a;font-size:12.8px;font-weight:400;line-height:23px;text-align:center;white-space:nowrap">Not Started</div>
<div class="t" style="left:1501px;top:520.80px;font-size:12px;color:#ececec;font-weight:400;">2.00</div>
<div class="r" style="left:278px;top:576px;width:49px;height:1px;background:#2a2f38;"></div>
<div class="r" style="left:328px;top:576px;width:50px;height:1px;background:#2a2f38;"></div>
<div class="r" style="left:379px;top:576px;width:28px;height:1px;background:#2a2f38;"></div>
<div class="r" style="left:408px;top:576px;width:339px;height:1px;background:#2a2f38;"></div>
<div class="r" style="left:748px;top:576px;width:127px;height:1px;background:#2a2f38;"></div>
<div class="r" style="left:876px;top:576px;width:119px;height:1px;background:#2a2f38;"></div>
<div class="r" style="left:996px;top:576px;width:117px;height:1px;background:#2a2f38;"></div>
<div class="r" style="left:1114px;top:576px;width:280px;height:1px;background:#2a2f38;"></div>
<div class="r" style="left:1395px;top:576px;width:99px;height:1px;background:#2a2f38;"></div>
<div class="r" style="left:1495px;top:576px;width:100px;height:1px;background:#2a2f38;"></div>
<div class="t" style="left:282px;width:41px;text-align:center;top:554.80px;font-size:12px;color:#cfcfcf">9</div>
<div class="r" style="left:331px;top:547px;width:43px;height:26px"><svg width="43" height="26" viewBox="0 0 43 26"><use href="#thumb"/></svg></div>
<svg class="r" style="left:482px;top:551.1px;" width="16" height="18.8" viewBox="0 0 16 18.8"><path d="M2.8 2.9 L1.1 2.9 L1.1 16.3 Q1.1 17.7 2.5 17.7 L13.5 17.7 Q14.9 17.7 14.9 16.3 L14.9 2.9 L13.2 2.9" fill="none" stroke="#e6e6e6" stroke-width="2.2"/><rect x="3.3" y="2.9" width="9.4" height="2.1" fill="#e6e6e6"/><circle cx="8" cy="1.9" r="1.35" fill="none" stroke="#e6e6e6" stroke-width="1.3"/><polyline points="3.7,10.1 6.6,13.6 12.1,7.2" fill="none" stroke="#e6e6e6" stroke-width="2"/></svg>
<div class="t" style="left:503px;top:553.89px;font-size:12.6px;color:#a8cbf2;font-weight:400;">groom</div>
<div class="t" style="left:754px;top:554.80px;font-size:12px;color:#b9b9b9;font-weight:400;">Task (FX)</div>
<div class="r" style="left:882px;top:549px;width:107px;height:22px;background:#f6f600;border-radius:2px;color:#3a3a2a;font-size:12.1px;font-weight:400;line-height:23px;text-align:center;white-space:nowrap">Pending Clien...</div>
<div class="t" style="left:1002px;top:554.80px;font-size:12px;color:#acacac;font-weight:400;">Cole S</div>
<div class="t" style="left:1501px;top:554.80px;font-size:12px;color:#ececec;font-weight:400;">2.00</div>
<div class="r" style="left:278px;top:610px;width:49px;height:1px;background:#2a2f38;"></div>
<div class="r" style="left:328px;top:610px;width:50px;height:1px;background:#2a2f38;"></div>
<div class="r" style="left:379px;top:610px;width:28px;height:1px;background:#2a2f38;"></div>
<div class="r" style="left:408px;top:610px;width:339px;height:1px;background:#2a2f38;"></div>
<div class="r" style="left:748px;top:610px;width:127px;height:1px;background:#2a2f38;"></div>
<div class="r" style="left:876px;top:610px;width:119px;height:1px;background:#2a2f38;"></div>
<div class="r" style="left:996px;top:610px;width:117px;height:1px;background:#2a2f38;"></div>
<div class="r" style="left:1114px;top:610px;width:280px;height:1px;background:#2a2f38;"></div>
<div class="r" style="left:1395px;top:610px;width:99px;height:1px;background:#2a2f38;"></div>
<div class="r" style="left:1495px;top:610px;width:100px;height:1px;background:#2a2f38;"></div>
<div class="t" style="left:282px;width:41px;text-align:center;top:588.80px;font-size:12px;color:#cfcfcf">10</div>
<div class="r" style="left:331px;top:581px;width:43px;height:26px"><svg width="43" height="26" viewBox="0 0 43 26"><use href="#thumb"/></svg></div>
<svg class="r" style="left:450.8px;top:586.8px;" width="6.3" height="10.3" viewBox="0 0 6.3 10.3"><polygon points="1.66,0 0,1.96 2.65,5.15 0,8.34 1.66,10.3 6.3,5.15" fill="#e6e6e6"/></svg>
<svg class="r" style="left:465.9px;top:585.9px;" width="16.2" height="16" viewBox="0 0 16.2 16"><polygon points="1.9,0 7.2,0 7.2,4.3 0,4.3" fill="#e3e3e3"/><polygon points="8.8,0 14.1,0 16.2,4.3 8.8,4.3" fill="#e3e3e3"/><rect x="0" y="5.9" width="16.2" height="10.1" fill="#e3e3e3"/></svg>
<div class="t" style="left:487px;top:587.89px;font-size:12.6px;color:#a8cbf2;font-weight:400;">Mother</div>
<div class="t" style="left:754px;top:588.80px;font-size:12px;color:#b9b9b9;font-weight:400;letter-spacing:-0.2px">Asset Build (Charac...</div>
<svg class="r" style="left:882px;top:591px;shape-rendering:crispEdges" width="107" height="7" viewBox="0 0 107 7"><rect x="0.00" y="0" width="64.00" height="7" fill="#3a9be0"/><rect x="64.00" y="0" width="43.00" height="7" fill="#cccccc"/></svg>
<div class="t" style="left:1401px;top:588.80px;font-size:12px;color:#ececec;font-weight:400;">2022-07-29 0...</div>
<div class="t" style="left:1501px;top:588.80px;font-size:12px;color:#ececec;font-weight:400;">10.25</div>
<div class="r" style="left:278px;top:644px;width:49px;height:1px;background:#2a2f38;"></div>
<div class="r" style="left:328px;top:644px;width:50px;height:1px;background:#2a2f38;"></div>
<div class="r" style="left:379px;top:644px;width:28px;height:1px;background:#2a2f38;"></div>
<div class="r" style="left:408px;top:644px;width:339px;height:1px;background:#2a2f38;"></div>
<div class="r" style="left:748px;top:644px;width:127px;height:1px;background:#2a2f38;"></div>
<div class="r" style="left:876px;top:644px;width:119px;height:1px;background:#2a2f38;"></div>
<div class="r" style="left:996px;top:644px;width:117px;height:1px;background:#2a2f38;"></div>
<div class="r" style="left:1114px;top:644px;width:280px;height:1px;background:#2a2f38;"></div>
<div class="r" style="left:1395px;top:644px;width:99px;height:1px;background:#2a2f38;"></div>
<div class="r" style="left:1495px;top:644px;width:100px;height:1px;background:#2a2f38;"></div>
<div class="t" style="left:282px;width:41px;text-align:center;top:622.80px;font-size:12px;color:#cfcfcf">11</div>
<div class="r" style="left:331px;top:615px;width:43px;height:26px"><svg width="43" height="26" viewBox="0 0 43 26"><use href="#thumb"/></svg></div>
<svg class="r" style="left:434.8px;top:620.8px;" width="6.3" height="10.3" viewBox="0 0 6.3 10.3"><polygon points="1.66,0 0,1.96 2.65,5.15 0,8.34 1.66,10.3 6.3,5.15" fill="#e6e6e6"/></svg>
<svg class="r" style="left:449.8px;top:622.1px;" width="16.4" height="13.5" viewBox="0 0 16.4 13.5"><path d="M0 1.5 Q0 0 1.5 0 L7.3 0 L8.6 1.8 L14.9 1.8 Q16.4 1.8 16.4 3.3 L16.4 12 Q16.4 13.5 14.9 13.5 L1.5 13.5 Q0 13.5 0 12 Z" fill="#e3e3e3"/></svg>
<div class="t" style="left:471px;top:621.89px;font-size:12.6px;color:#a8cbf2;font-weight:400;">C005</div>
<div class="t" style="left:754px;top:622.80px;font-size:12px;color:#b9b9b9;font-weight:400;">Sequence</div>
<svg class="r" style="left:882px;top:625px;shape-rendering:crispEdges" width="107" height="7" viewBox="0 0 107 7"><rect x="0.00" y="0" width="4.00" height="7" fill="#9dca00"/><rect x="4.00" y="0" width="7.60" height="7" fill="#1fbd8e"/><rect x="11.60" y="0" width="3.90" height="7" fill="#f6f600"/><rect x="15.50" y="0" width="2.10" height="7" fill="#e2503f"/><rect x="17.60" y="0" width="29.20" height="7" fill="#1fbd8e"/><rect x="46.80" y="0" width="6.20" height="7" fill="#f0b812"/><rect x="53.00" y="0" width="22.00" height="7" fill="#3a9be0"/><rect x="75.00" y="0" width="32.00" height="7" fill="#cccccc"/></svg>
<div class="t" style="left:1002px;top:622.97px;font-size:11.8px;color:#eeeeee;font-weight:700;">Napo Comp</div>
<div class="t" style="left:1401px;top:622.80px;font-size:12px;color:#ececec;font-weight:400;">2022-10-21 1...</div>
<div class="t" style="left:1501px;top:622.80px;font-size:12px;color:#ececec;font-weight:400;">82.00</div>
<div class="r" style="left:278px;top:678px;width:49px;height:1px;background:#2a2f38;"></div>
<div class="r" style="left:328px;top:678px;width:50px;height:1px;background:#2a2f38;"></div>
<div class="r" style="left:379px;top:678px;width:28px;height:1px;background:#2a2f38;"></div>
<div class="r" style="left:408px;top:678px;width:339px;height:1px;background:#2a2f38;"></div>
<div class="r" style="left:748px;top:678px;width:127px;height:1px;background:#2a2f38;"></div>
<div class="r" style="left:876px;top:678px;width:119px;height:1px;background:#2a2f38;"></div>
<div class="r" style="left:996px;top:678px;width:117px;height:1px;background:#2a2f38;"></div>
<div class="r" style="left:1114px;top:678px;width:280px;height:1px;background:#2a2f38;"></div>
<div class="r" style="left:1395px;top:678px;width:99px;height:1px;background:#2a2f38;"></div>
<div class="r" style="left:1495px;top:678px;width:100px;height:1px;background:#2a2f38;"></div>
<div class="t" style="left:282px;width:41px;text-align:center;top:656.80px;font-size:12px;color:#cfcfcf">12</div>
<div class="r" style="left:331px;top:649px;width:43px;height:26px"><svg width="43" height="26" viewBox="0 0 43 26"><use href="#thumb"/></svg></div>
<svg class="r" style="left:434.8px;top:654.8px;" width="6.3" height="10.3" viewBox="0 0 6.3 10.3"><polygon points="1.66,0 0,1.96 2.65,5.15 0,8.34 1.66,10.3 6.3,5.15" fill="#e6e6e6"/></svg>
<svg class="r" style="left:449.8px;top:656.1px;" width="16.4" height="13.5" viewBox="0 0 16.4 13.5"><path d="M0 1.5 Q0 0 1.5 0 L7.3 0 L8.6 1.8 L14.9 1.8 Q16.4 1.8 16.4 3.3 L16.4 12 Q16.4 13.5 14.9 13.5 L1.5 13.5 Q0 13.5 0 12 Z" fill="#e3e3e3"/></svg>
<div class="t" style="left:471px;top:655.89px;font-size:12.6px;color:#a8cbf2;font-weight:400;">C006</div>
<div class="t" style="left:754px;top:656.80px;font-size:12px;color:#b9b9b9;font-weight:400;">Sequence</div>
<svg class="r" style="left:882px;top:659px;shape-rendering:crispEdges" width="107" height="7" viewBox="0 0 107 7"><rect x="0.00" y="0" width="3.00" height="7" fill="#1fbd8e"/><rect x="3.00" y="0" width="22.90" height="7" fill="#9dca00"/><rect x="25.90" y="0" width="16.90" height="7" fill="#1fbd8e"/><rect x="42.80" y="0" width="3.20" height="7" fill="#f6f600"/><rect x="46.00" y="0" width="29.00" height="7" fill="#1fbd8e"/><rect x="75.00" y="0" width="28.70" height="7" fill="#3a9be0"/><rect x="103.70" y="0" width="3.30" height="7" fill="#cccccc"/></svg>
<div class="t" style="left:1401px;top:656.80px;font-size:12px;color:#ececec;font-weight:400;">2021-04-06 1...</div>
<div class="t" style="left:1501px;top:656.80px;font-size:12px;color:#ececec;font-weight:400;">65.75</div>
<div class="r" style="left:278px;top:712px;width:49px;height:1px;background:#2a2f38;"></div>
<div class="r" style="left:328px;top:712px;width:50px;height:1px;background:#2a2f38;"></div>
<div class="r" style="left:379px;top:712px;width:28px;height:1px;background:#2a2f38;"></div>
<div class="r" style="left:408px;top:712px;width:339px;height:1px;background:#2a2f38;"></div>
<div class="r" style="left:748px;top:712px;width:127px;height:1px;background:#2a2f38;"></div>
<div class="r" style="left:876px;top:712px;width:119px;height:1px;background:#2a2f38;"></div>
<div class="r" style="left:996px;top:712px;width:117px;height:1px;background:#2a2f38;"></div>
<div class="r" style="left:1114px;top:712px;width:280px;height:1px;background:#2a2f38;"></div>
<div class="r" style="left:1395px;top:712px;width:99px;height:1px;background:#2a2f38;"></div>
<div class="r" style="left:1495px;top:712px;width:100px;height:1px;background:#2a2f38;"></div>
<div class="t" style="left:282px;width:41px;text-align:center;top:690.80px;font-size:12px;color:#cfcfcf">13</div>
<div class="r" style="left:331px;top:683px;width:43px;height:26px"><svg width="43" height="26" viewBox="0 0 43 26"><use href="#thumb"/></svg></div>
<svg class="r" style="left:434.8px;top:688.8px;" width="6.3" height="10.3" viewBox="0 0 6.3 10.3"><polygon points="1.66,0 0,1.96 2.65,5.15 0,8.34 1.66,10.3 6.3,5.15" fill="#e6e6e6"/></svg>
<svg class="r" style="left:449.8px;top:690.1px;" width="16.4" height="13.5" viewBox="0 0 16.4 13.5"><path d="M0 1.5 Q0 0 1.5 0 L7.3 0 L8.6 1.8 L14.9 1.8 Q16.4 1.8 16.4 3.3 L16.4 12 Q16.4 13.5 14.9 13.5 L1.5 13.5 Q0 13.5 0 12 Z" fill="#e3e3e3"/></svg>
<div class="t" style="left:471px;top:689.89px;font-size:12.6px;color:#a8cbf2;font-weight:400;">C007</div>
<div class="t" style="left:754px;top:690.80px;font-size:12px;color:#b9b9b9;font-weight:400;">Folder</div>
<svg class="r" style="left:882px;top:693px;shape-rendering:crispEdges" width="107" height="7" viewBox="0 0 107 7"><rect x="0.00" y="0" width="54.00" height="7" fill="#1fbd8e"/><rect x="54.00" y="0" width="26.00" height="7" fill="#3a9be0"/><rect x="80.00" y="0" width="27.00" height="7" fill="#cccccc"/></svg>
<div class="t" style="left:1401px;top:690.80px;font-size:12px;color:#ececec;font-weight:400;">2021-02-26 2...</div>
<div class="t" style="left:1501px;top:690.80px;font-size:12px;color:#ececec;font-weight:400;">3.00</div>
<div class="r" style="left:278px;top:746px;width:49px;height:1px;background:#2a2f38;"></div>
<div class="r" style="left:328px;top:746px;width:50px;height:1px;background:#2a2f38;"></div>
<div class="r" style="left:379px;top:746px;width:28px;height:1px;background:#2a2f38;"></div>
<div class="r" style="left:408px;top:746px;width:339px;height:1px;background:#2a2f38;"></div>
<div class="r" style="left:748px;top:746px;width:127px;height:1px;background:#2a2f38;"></div>
<div class="r" style="left:876px;top:746px;width:119px;height:1px;background:#2a2f38;"></div>
<div class="r" style="left:996px;top:746px;width:117px;height:1px;background:#2a2f38;"></div>
<div class="r" style="left:1114px;top:746px;width:280px;height:1px;background:#2a2f38;"></div>
<div class="r" style="left:1395px;top:746px;width:99px;height:1px;background:#2a2f38;"></div>
<div class="r" style="left:1495px;top:746px;width:100px;height:1px;background:#2a2f38;"></div>
<div class="t" style="left:282px;width:41px;text-align:center;top:724.80px;font-size:12px;color:#cfcfcf">14</div>
<div class="r" style="left:331px;top:717px;width:43px;height:26px"><svg width="43" height="26" viewBox="0 0 43 26"><use href="#thumb"/></svg></div>
<svg class="r" style="left:434.8px;top:722.8px;" width="6.3" height="10.3" viewBox="0 0 6.3 10.3"><polygon points="1.66,0 0,1.96 2.65,5.15 0,8.34 1.66,10.3 6.3,5.15" fill="#e6e6e6"/></svg>
<svg class="r" style="left:449.8px;top:724.1px;" width="16.4" height="13.5" viewBox="0 0 16.4 13.5"><path d="M0 1.5 Q0 0 1.5 0 L7.3 0 L8.6 1.8 L14.9 1.8 Q16.4 1.8 16.4 3.3 L16.4 12 Q16.4 13.5 14.9 13.5 L1.5 13.5 Q0 13.5 0 12 Z" fill="#e3e3e3"/></svg>
<div class="t" style="left:471px;top:723.89px;font-size:12.6px;color:#a8cbf2;font-weight:400;">Design</div>
<div class="t" style="left:754px;top:724.80px;font-size:12px;color:#b9b9b9;font-weight:400;">Folder</div>
<svg class="r" style="left:882px;top:727px;shape-rendering:crispEdges" width="107" height="7" viewBox="0 0 107 7"><rect x="0.00" y="0" width="107.00" height="7" fill="#3a9be0"/></svg>
<div class="t" style="left:1401px;top:724.80px;font-size:12px;color:#ececec;font-weight:400;">2021-01-14 2...</div>
<div class="t" style="left:1501px;top:724.80px;font-size:12px;color:#ececec;font-weight:400;">8.75</div>
<div class="r" style="left:278px;top:780px;width:49px;height:1px;background:#2a2f38;"></div>
<div class="r" style="left:328px;top:780px;width:50px;height:1px;background:#2a2f38;"></div>
<div class="r" style="left:379px;top:780px;width:28px;height:1px;background:#2a2f38;"></div>
<div class="r" style="left:408px;top:780px;width:339px;height:1px;background:#2a2f38;"></div>
<div class="r" style="left:748px;top:780px;width:127px;height:1px;background:#2a2f38;"></div>
<div class="r" style="left:876px;top:780px;width:119px;height:1px;background:#2a2f38;"></div>
<div class="r" style="left:996px;top:780px;width:117px;height:1px;background:#2a2f38;"></div>
<div class="r" style="left:1114px;top:780px;width:280px;height:1px;background:#2a2f38;"></div>
<div class="r" style="left:1395px;top:780px;width:99px;height:1px;background:#2a2f38;"></div>
<div class="r" style="left:1495px;top:780px;width:100px;height:1px;background:#2a2f38;"></div>
<div class="t" style="left:282px;width:41px;text-align:center;top:758.80px;font-size:12px;color:#cfcfcf">15</div>
<div class="r" style="left:331px;top:751px;width:43px;height:26px"><svg width="43" height="26" viewBox="0 0 43 26"><use href="#thumb"/></svg></div>
<svg class="r" style="left:450.6px;top:756.4px;" width="14.7" height="15.7" viewBox="0 0 14.7 15.7"><polygon points="7.35,0 14.7,7.85 7.35,15.7 0,7.85" fill="#e3e3e3"/></svg>
<div class="t" style="left:471px;top:757.89px;font-size:12.6px;color:#a8cbf2;font-weight:400;">Anim Blocking</div>
<div class="t" style="left:754px;top:758.80px;font-size:12px;color:#b9b9b9;font-weight:400;">Milestone (Animati...</div>
<div class="r" style="left:882px;top:753px;width:107px;height:22px;background:#1fbd8e;border-radius:2px;color:#eaf5f0;font-size:11.8px;font-weight:700;line-height:23px;text-align:center;white-space:nowrap">Completed</div>
<div class="t" style="left:1401px;top:758.80px;font-size:12px;color:#ececec;font-weight:400;">2021-03-05 1...</div>
<div class="t" style="left:1501px;top:758.80px;font-size:12px;color:#ececec;font-weight:400;">0.00</div>
<div class="r" style="left:278px;top:814px;width:49px;height:1px;background:#2a2f38;"></div>
<div class="r" style="left:328px;top:814px;width:50px;height:1px;background:#2a2f38;"></div>
<div class="r" style="left:379px;top:814px;width:28px;height:1px;background:#2a2f38;"></div>
<div class="r" style="left:408px;top:814px;width:339px;height:1px;background:#2a2f38;"></div>
<div class="r" style="left:748px;top:814px;width:127px;height:1px;background:#2a2f38;"></div>
<div class="r" style="left:876px;top:814px;width:119px;height:1px;background:#2a2f38;"></div>
<div class="r" style="left:996px;top:814px;width:117px;height:1px;background:#2a2f38;"></div>
<div class="r" style="left:1114px;top:814px;width:280px;height:1px;background:#2a2f38;"></div>
<div class="r" style="left:1395px;top:814px;width:99px;height:1px;background:#2a2f38;"></div>
<div class="r" style="left:1495px;top:814px;width:100px;height:1px;background:#2a2f38;"></div>
<div class="t" style="left:282px;width:41px;text-align:center;top:792.80px;font-size:12px;color:#cfcfcf">16</div>
<div class="r" style="left:331px;top:785px;width:43px;height:26px"><svg width="43" height="26" viewBox="0 0 43 26"><use href="#thumb"/></svg></div>
<svg class="r" style="left:450.6px;top:790.4px;" width="14.7" height="15.7" viewBox="0 0 14.7 15.7"><polygon points="7.35,0 14.7,7.85 7.35,15.7 0,7.85" fill="#e3e3e3"/></svg>
<div class="t" style="left:471px;top:791.89px;font-size:12.6px;color:#a8cbf2;font-weight:400;">Final Anim Delivery</div>
<div class="t" style="left:754px;top:792.80px;font-size:12px;color:#b9b9b9;font-weight:400;">Milestone (Animati...</div>
<div class="r" style="left:882px;top:787px;width:107px;height:22px;background:#3a9be0;border-radius:2px;color:#eaf5f0;font-size:11.4px;font-weight:700;line-height:23px;text-align:center;white-space:nowrap">In Progress</div>
<div class="t" style="left:1401px;top:792.80px;font-size:12px;color:#ececec;font-weight:400;">2021-03-25 0...</div>
<div class="t" style="left:1501px;top:792.80px;font-size:12px;color:#ececec;font-weight:400;">0.00</div>
<svg class="r" style="left:983px;top:707px;" width="12" height="19" viewBox="0 0 12 19"><path d="M1 1 L1 15.5 L4.6 12.2 L7.2 18 L9.4 17 L6.9 11.4 L11.5 11.4 Z" fill="#111" stroke="#eee" stroke-width="1"/></svg>
<div class="r" style="left:85px;top:0px;width:120px;height:54px;box-sizing:border-box;border:5px solid #00c587;box-shadow:0 0 3px 1px rgba(0,0,0,0.7), 0 2px 5px 1px rgba(0,0,0,0.45), inset 0 0 3px 1px rgba(0,0,0,0.7)"></div>
<div class="r" style="left:267px;top:44px;width:473px;height:65px;box-sizing:border-box;border:5px solid #00c587;box-shadow:0 0 3px 1px rgba(0,0,0,0.7), 0 2px 5px 1px rgba(0,0,0,0.45), inset 0 0 3px 1px rgba(0,0,0,0.7)"></div>
</div></body></html>
